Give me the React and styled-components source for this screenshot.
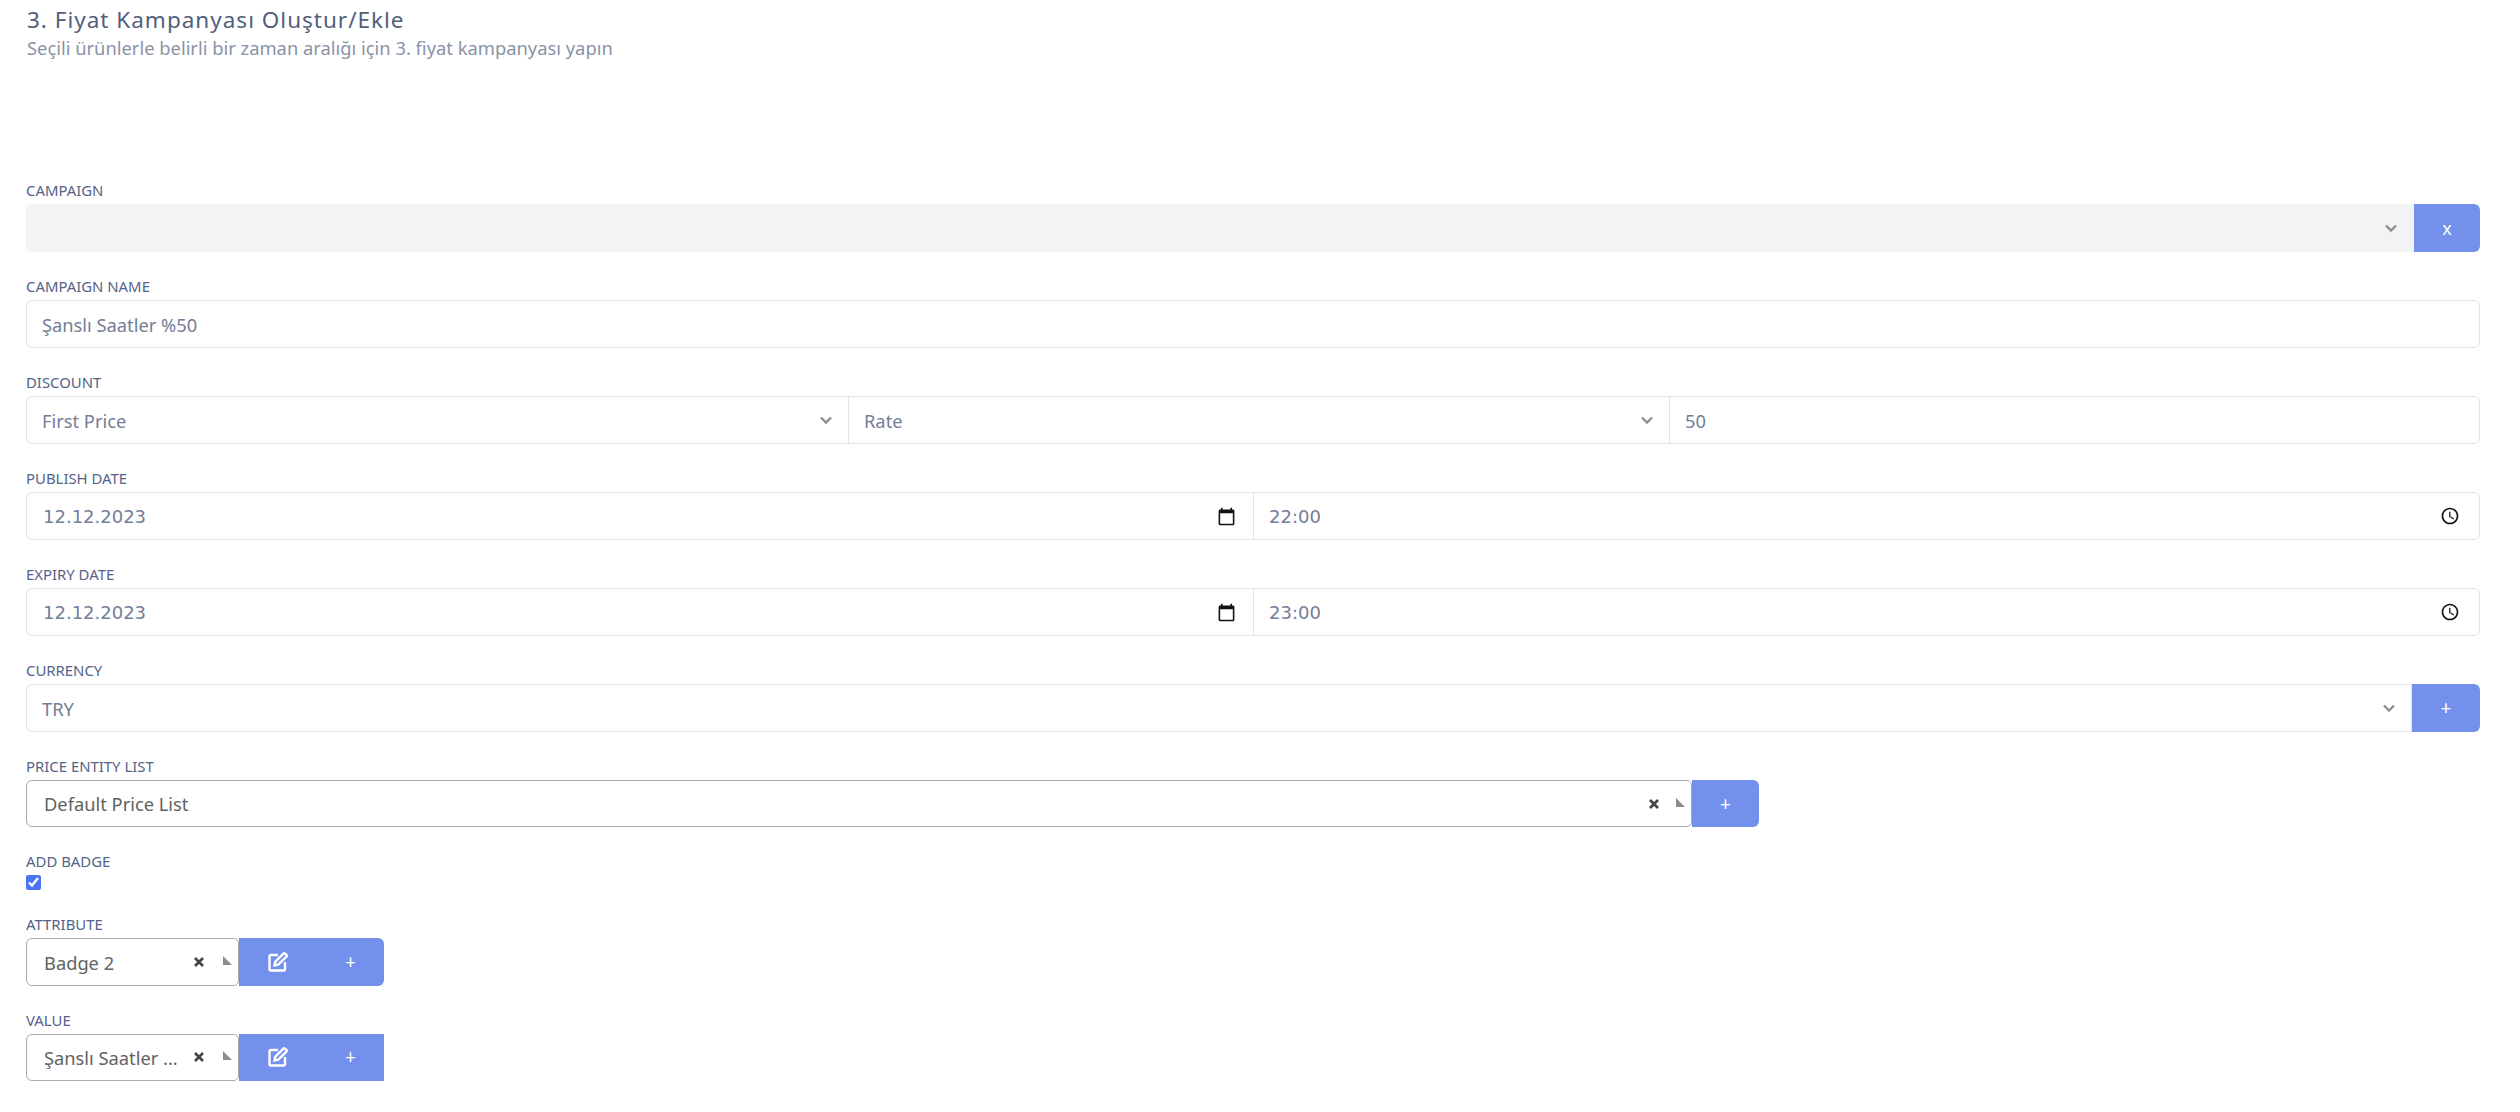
import React from 'react';
import styled, { createGlobalStyle } from 'styled-components';

const GlobalStyle = createGlobalStyle`
    html, body {
        margin: 0;
        background: #fff;
        font-family: "Noto Sans", "Liberation Sans", sans-serif;
    }
`;

const BLUE = '#7390ec';

const Page = styled.div`
    padding: 7px 40px 0 26px;
`;

const Header = styled.header`
    height: 173px;
    padding-left: 1px;
`;

const Title = styled.h1`
    margin: 0;
    font-size: 22.5px;
    line-height: 26px;
    font-weight: 400;
    letter-spacing: 1px;
    color: #515f7c;
`;

const Subtitle = styled.p`
    margin: 2px 0 0;
    font-size: 18.35px;
    line-height: 26px;
    color: #8a93a6;
`;

const Form = styled.form`
    display: flex;
    flex-direction: column;
    gap: 24px;
`;

const Field = styled.div`
    display: flex;
    flex-direction: column;
    gap: 4px;
`;

const Label = styled.label`
    font-size: 14.9px;
    line-height: 20px;
    color: #55638a;
`;

const Row = styled.div`
    display: flex;
    height: ${p => p.$height || '48px'};
    width: ${p => p.$width || '100%'};
`;

const Control = styled.div`
    flex: ${p => (p.$width ? `0 0 ${p.$width}` : 1)};
    min-width: 0;
    box-sizing: border-box;
    display: flex;
    align-items: center;
    justify-content: space-between;
    padding: 0 15px;
    font-family: ${p => (p.$date ? '"DejaVu Sans", sans-serif' : 'inherit')};
    font-size: ${p => (p.$date ? '18px' : '18.3px')};
    color: #727e97;
    border: 1px solid ${p => (p.$muted ? '#f2f4f4' : '#e1e2e7')};
    background: ${p => (p.$muted ? '#f2f4f4' : '#fff')};
    margin-left: ${p => (p.$joined ? '-1px' : '0')};

    &:first-child {
        border-radius: 6px 0 0 6px;
        padding-left: ${p => (p.$date ? '16px' : '15px')};
    }
    &:last-child {
        border-radius: 0 6px 6px 0;
    }
    &:only-child {
        border-radius: 6px;
    }
`;

const Chevron = styled.svg`
    width: 14px;
    height: 14px;
    flex: none;
    fill: none;
    stroke: #8f8f8f;
    stroke-width: 2.4;
`;

const PickerIcon = styled.svg`
    width: ${p => p.$size};
    height: ${p => p.$size};
    margin-right: ${p => p.$inset};
    flex: none;
    fill: #111;
`;

const SquareButton = styled.button`
    flex: none;
    box-sizing: border-box;
    width: ${p => p.$width || '68px'};
    border: 0;
    padding: 0 0 0 ${p => p.$shift || '0'};
    display: flex;
    align-items: center;
    justify-content: center;
    background: ${BLUE};
    color: #fff;
    font-family: inherit;
    font-size: ${p => p.$size || '19px'};
    &:last-child {
        border-radius: ${p => (p.$square ? '0' : '0 6px 6px 0')};
    }
`;

const Combo = styled.div`
    box-sizing: border-box;
    flex: none;
    width: ${p => p.$width};
    display: flex;
    align-items: center;
    padding: 0 6px 0 17px;
    border: 1px solid #aaa;
    border-radius: 6px 5px 5px 6px;
    font-size: 18.3px;
    color: #626262;
`;

const ComboText = styled.span`
    flex: 1;
    min-width: 0;
    white-space: nowrap;
`;

const Clear = styled.svg`
    width: 10px;
    height: 10px;
    flex: none;
    margin-right: ${p => p.$gap || '17px'};
    stroke: #444;
    stroke-width: 2.6;
`;

const ComboArrow = styled.span`
    flex: none;
    width: 0;
    height: 0;
    margin-top: -3px;
    border-left: 9px solid #8d8d8d;
    border-top: 9px solid transparent;
`;

const Check = styled.input`
    display: block;
    margin: 0;
    width: 15px;
    height: 15px;
    accent-color: #4a76f5;
`;

const ChevronDown = () => (
    <Chevron viewBox="0 0 14 14"><path d="M2 4.5l5 5 5-5" /></Chevron>
);

const CalendarIcon = () => (
    <PickerIcon viewBox="0 0 24 24" $size="19px" $inset="2px">
        <path d="M20 3h-1V1h-2v2H7V1H5v2H4c-1.1 0-2 .9-2 2v16c0 1.1.9 2 2 2h16c1.1 0 2-.9 2-2V5c0-1.1-.9-2-2-2zm0 18H4V8h16v13z" />
    </PickerIcon>
);

const ClockIcon = () => (
    <PickerIcon viewBox="0 0 24 24" $size="20px" $inset="4px">
        <path d="M11.99 2C6.47 2 2 6.48 2 12s4.47 10 9.99 10C17.52 22 22 17.52 22 12S17.52 2 11.99 2zM12 20c-4.42 0-8-3.58-8-8s3.58-8 8-8 8 3.58 8 8-3.58 8-8 8z" />
        <path d="M12.5 7H11v6l5.25 3.15.75-1.23-4.500-2.670z" />
    </PickerIcon>
);

const EditIcon = () => (
    <svg width="20" height="20" viewBox="0 0 20 20" fill="none" stroke="#fff" strokeWidth="2.4">
        <path d="M10 3H3A1.500 1.500 0 0 0 1.500 4.500V17A1.500 1.500 0 0 0 3 18.500H15.500A1.500 1.500 0 0 0 17 17V10" />
        <path d="M6.500 13.500l.8-3.800L15.200 1.800a1.500 1.500 0 0 1 2.100 0l.9.9a1.500 1.500 0 0 1 0 2.100L10.300 12.700z" />
    </svg>
);

const ComboField = ({ label, value, width, children }) => (
    <Field>
        <Label>{label}</Label>
        <Row $width={width ? undefined : '1733px'} $height="47.4px">
            <Combo $width={width || '1666px'}>
                <ComboText>{value}</ComboText>
                <Clear viewBox="0 0 10 10" $gap={width ? '19px' : undefined}><path d="M1 1l8 8M9 1l-8 8" /></Clear>
                <ComboArrow />
            </Combo>
            {children}
        </Row>
    </Field>
);

const DateField = ({ label, date, time }) => (
    <Field>
        <Label>{label}</Label>
        <Row>
            <Control $date>{date}<CalendarIcon /></Control>
            <Control $date $joined>{time}<ClockIcon /></Control>
        </Row>
    </Field>
);

const BadgeButtons = ({ square }) => (
    <>
        <SquareButton $width="72px" $shift="6px"><EditIcon /></SquareButton>
        <SquareButton $width="73px" $shift="6px" $square={square}>+</SquareButton>
    </>
);

export default function App() {
    return (
        <Page>
            <GlobalStyle />
            <Header>
                <Title>3. Fiyat Kampanyası Oluştur/Ekle</Title>
                <Subtitle>Seçili ürünlerle belirli bir zaman aralığı için 3. fiyat kampanyası yapın</Subtitle>
            </Header>
            <Form>
                <Field>
                    <Label>CAMPAIGN</Label>
                    <Row>
                        <Control $muted><span /><ChevronDown /></Control>
                        <SquareButton $width="66px" $size="18px">x</SquareButton>
                    </Row>
                </Field>
                <Field>
                    <Label>CAMPAIGN NAME</Label>
                    <Row><Control>Şanslı Saatler %50</Control></Row>
                </Field>
                <Field>
                    <Label>DISCOUNT</Label>
                    <Row>
                        <Control $width="823px">First Price<ChevronDown /></Control>
                        <Control $width="822px" $joined>Rate<ChevronDown /></Control>
                        <Control $joined>50</Control>
                    </Row>
                </Field>
                <DateField label="PUBLISH DATE" date="12.12.2023" time="22:00" />
                <DateField label="EXPIRY DATE" date="12.12.2023" time="23:00" />
                <Field>
                    <Label>CURRENCY</Label>
                    <Row>
                        <Control>TRY<ChevronDown /></Control>
                        <SquareButton>+</SquareButton>
                    </Row>
                </Field>
                <ComboField label="PRICE ENTITY LIST" value="Default Price List">
                    <SquareButton $width="67px">+</SquareButton>
                </ComboField>
                <Field>
                    <Label>ADD BADGE</Label>
                    <Check type="checkbox" defaultChecked />
                </Field>
                <ComboField label="ATTRIBUTE" value="Badge 2" width="213px">
                    <BadgeButtons />
                </ComboField>
                <ComboField label="VALUE" value="Şanslı Saatler ..." width="213px">
                    <BadgeButtons square />
                </ComboField>
            </Form>
        </Page>
    );
}
